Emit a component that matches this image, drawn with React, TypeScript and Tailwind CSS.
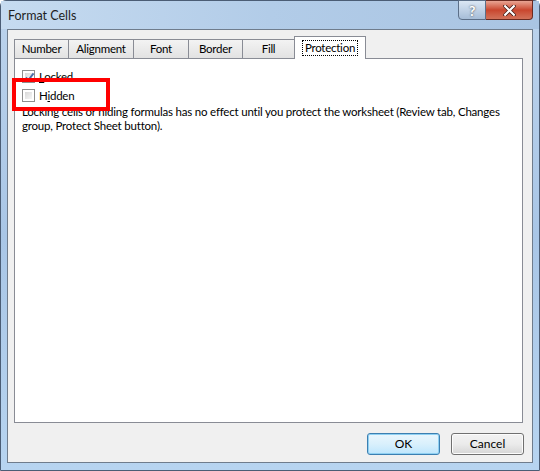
import React from "react"

const tabs = [
  { name: "Number", w: "w-[55px]" },
  { name: "Alignment", w: "w-[66px]" },
  { name: "Font", w: "w-[56px]" },
  { name: "Border", w: "w-[55px]" },
  { name: "Fill", w: "w-[53px]" },
]

function CheckBox({ checked }: { checked?: boolean }) {
  return (
    <div className="w-[13px] h-[13px] border border-[#8e8f8f] bg-white p-[2px] shrink-0">
      <div className="w-full h-full bg-gradient-to-br from-[#d8d8d8] to-[#f6f6f6] relative">
        {checked && (
          <svg viewBox="0 0 9 9" className="absolute -inset-[1px] w-[11px] h-[11px]">
            <path d="M1.5 4.5 L3.5 6.8 L7.8 1.2" fill="none" stroke="#4a6ea8" strokeWidth="1.6" />
          </svg>
        )}
      </div>
    </div>
  )
}

export default function App() {
  return (
    <div
      className="w-[540px] h-[471px] flex flex-col rounded-t-[6px] border border-[#4b5d75] bg-gradient-to-b from-[#bcd3ec] via-[#a9c6e6] to-[#b7d4f0] text-[11.5px] text-black tracking-[-0.25px]"
      style={{ fontFamily: 'Lato, "Noto Sans", "Liberation Sans", sans-serif' }}
    >
      {/* Title bar */}
      <div className="h-[28px] flex items-start justify-between pl-[7px] pr-[6px] bg-gradient-to-r from-[#c6dbf0] via-[#b2cce8] to-[#a9c4e2]">
        <span className="mt-[6px] text-[12.5px] tracking-normal text-[#1e1e1e]">Format Cells</span>
        <div className="flex -mt-[1px]">
          <div className="w-[28px] h-[20px] rounded-bl-[4px] border border-[#5c6f88] bg-gradient-to-b from-[#dbe7f4] to-[#a6bdd8] flex items-center justify-center text-white font-bold text-[14px] [text-shadow:0_0_2px_#333]">
            ?
          </div>
          <div className="w-[47px] h-[20px] rounded-br-[4px] border border-l-0 border-[#6b2a20] bg-gradient-to-b from-[#e8a493] via-[#c9462e] to-[#d2725a] flex items-center justify-center">
            <svg viewBox="0 0 12 10" className="w-[13px] h-[11px]">
              <path d="M2 1 L10 9 M10 1 L2 9" stroke="#3d1a14" strokeWidth="3.4" strokeLinecap="square" />
              <path d="M2 1 L10 9 M10 1 L2 9" stroke="#ffffff" strokeWidth="2" strokeLinecap="square" />
            </svg>
          </div>
        </div>
      </div>

      {/* Client area */}
      <div className="flex-1 mx-[6px] mb-[7px] border border-[#6f7c8c] bg-[#f0f0f0] flex flex-col">
        <div className="pl-[6px] pr-[9px] pt-[6px] flex flex-col">
          {/* Tabs */}
          <div className="flex items-end h-[22px]">
            {tabs.map((t) => (
              <div
                key={t.name}
                className={`${t.w} h-[19px] -mr-[1px] border border-b-0 border-[#898c95] bg-gradient-to-b from-[#f3f3f3] to-[#e2e2e2] flex items-center justify-center`}
              >
                {t.name}
              </div>
            ))}
            <div className="w-[72px] h-[23px] -mb-[1px] relative z-10 border border-b-0 border-[#898c95] bg-white flex items-center justify-center">
              <span className="px-[2px] leading-[14px] border border-dotted border-black">Protection</span>
            </div>
          </div>

          {/* Panel */}
          <div className="h-[365px] border border-[#898c95] bg-white relative">
            <div className="pl-[7px] pt-[8px] flex flex-col">
              <div className="flex items-center gap-[4px] h-[19px]">
                <CheckBox checked />
                <span>
                  <span className="underline">L</span>ocked
                </span>
              </div>
              <div className="flex items-center gap-[4px] h-[19px]">
                <CheckBox />
                <span>
                  H<span className="underline">i</span>dden
                </span>
              </div>
              <p className="leading-[14px] whitespace-nowrap tracking-[-0.2px]">
                Locking cells or hiding formulas has no effect until you protect the worksheet (Review tab, Changes
                <br />
                group, Protect Sheet button).
              </p>
            </div>
            {/* Red highlight */}
            <div className="absolute left-[-3px] top-[19px] w-[98px] h-[33px] border-[4px] border-[#ff0000]" />
          </div>
        </div>

        {/* Buttons */}
        <div className="flex justify-end gap-[11px] pr-[8px] mt-[10px]">
          <button className="w-[73px] h-[22px] rounded-[3px] border border-[#3c7fb1] bg-gradient-to-b from-[#eaf6fd] via-[#d9f0fc] to-[#bee6fd] shadow-[inset_0_0_0_1px_#8fd0f2] text-[12px] tracking-normal">
            OK
          </button>
          <button className="w-[73px] h-[22px] rounded-[3px] border border-[#707070] bg-gradient-to-b from-[#f2f2f2] via-[#ebebeb] to-[#d6d6d6] shadow-[inset_0_0_0_1px_#fcfcfc] text-[12px] tracking-normal">
            Cancel
          </button>
        </div>
      </div>
    </div>
  )
}
